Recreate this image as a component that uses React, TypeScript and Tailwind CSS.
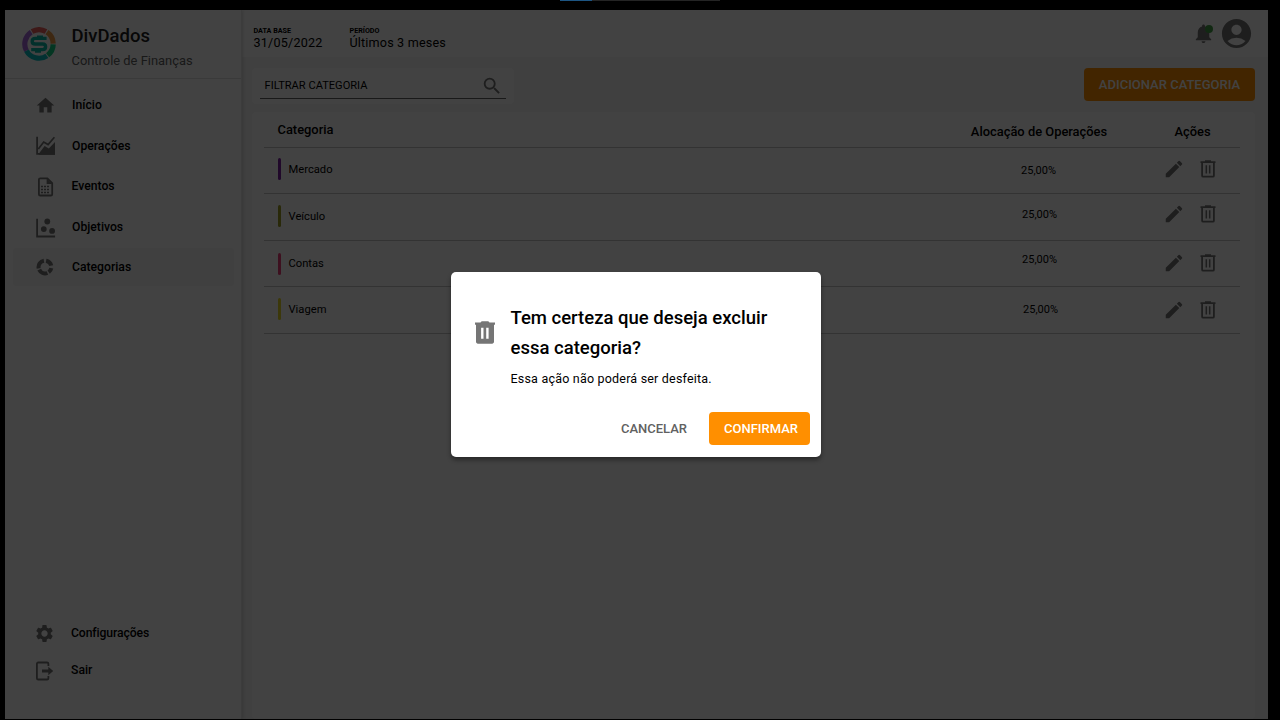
import type { ReactNode } from "react";
import { MdHome, MdSettings, MdNotifications, MdAccountCircle, MdEdit, MdSearch } from "react-icons/md";

function Logo() {
  return (
    <svg viewBox="0 0 34 34" className="mt-px size-[34px]" fill="none">
      <g strokeWidth="5.2">
        <path d="M10 4.6A14.2 14.2 0 0 1 24 4.6" stroke="#f0605c" />
        <path d="M25 5.2A14.2 14.2 0 0 1 31.2 16.6" stroke="#f09a45" />
        <path d="M31.2 17.4A14.2 14.2 0 0 1 25.6 28.3" stroke="#12cf84" />
        <path d="M24.9 28.8A14.2 14.2 0 0 1 4.4 23.6" stroke="#08bfc2" />
        <path d="M4.4 23.6A14.2 14.2 0 0 1 9.2 5.2" stroke="#a66adc" />
      </g>
      <path d="M24.6 11.4H13.2c-2 0-3 1-3 2.800s1 2.800 3 2.800h7.400c2 0 3 1 3 2.800s-1 2.800-3 2.800H9.200" stroke="#08b8a8" strokeWidth="3.400" />
      <path d="M15 8.400h6v2h-6zM13 23.600h6v2.200h-6z" fill="#08b8a8" />
    </svg>
  );
}

function AreaIcon() {
  return (
    <svg viewBox="0 0 20 20" className="size-5">
      <path d="M1.1.8v17.1H19" fill="none" stroke="currentColor" strokeWidth="1.8" />
      <path d="M2.3 13l5.400-7 4.400 2.600L18.400 1.200" fill="none" stroke="currentColor" strokeWidth="1.700" />
      <path d="M3 17.600l5.600-7.500 4.200 2.500L19 6v12.700H2.500z" fill="currentColor" />
    </svg>
  );
}

function FileIcon() {
  return (
    <svg viewBox="0 0 20 20" className="size-5">
      <path d="M4.200 1.300h7.200l4.800 4.900v11a1.3 1.3 0 0 1-1.3 1.3H4.200a1.3 1.3 0 0 1-1.3-1.3V2.600a1.3 1.3 0 0 1 1.3-1.3z" fill="none" stroke="currentColor" strokeWidth="1.800" />
      <path d="M10.600 1.300l5.600 5.600h-5.600z" fill="currentColor" />
      <path d="M5 9.500h8M5 12.500h8M5 15.500h8" stroke="currentColor" strokeWidth="1.700" strokeDasharray="2 1" />
    </svg>
  );
}

function ScatterIcon() {
  return (
    <svg viewBox="0 0 20 20" className="size-5" fill="currentColor">
      <path d="M1.1.8v17.700h18" fill="none" stroke="currentColor" strokeWidth="1.800" />
      <circle cx="7.800" cy="11.100" r="2.900" />
      <circle cx="11.300" cy="3.500" r="2.900" />
      <circle cx="16.100" cy="12.900" r="2.900" />
    </svg>
  );
}

function DonutIcon() {
  return (
    <svg viewBox="0 0 20 20" className="size-5" fill="none" stroke="currentColor" strokeWidth="4">
      <path d="M10.100 3.700A6.400 6.400 0 0 1 15.200 8.700" />
      <path d="M15.300 11.200a6.400 6.400 0 0 1-2.600 4" />
      <path d="M11.400 16A6.400 6.400 0 0 1 3.200 12.700" />
      <path d="M2.700 11.400A6.400 6.400 0 0 1 7.900 3.700" />
    </svg>
  );
}

function ExitIcon() {
  return (
    <svg viewBox="0 0 20 20" className="size-5">
      <path d="M13.400 5V2.800A1.3 1.3 0 0 0 12.100 1.500H3.200a1.3 1.3 0 0 0-1.3 1.3v14.400a1.3 1.3 0 0 0 1.3 1.3h8.900a1.3 1.3 0 0 0 1.3-1.3V15" fill="none" stroke="currentColor" strokeWidth="1.800" />
      <path d="M7 8.400h6.300V5.700l4.900 4.300-4.900 4.300v-2.700H7z" fill="currentColor" />
    </svg>
  );
}

function TrashOutline() {
  return (
    <svg viewBox="0 0 16 18" className="h-[18px] w-4" fill="none" stroke="currentColor">
      <path d="M.5 2.100h15M5 1.200h6" strokeWidth="1.700" />
      <path d="M2.100 2.500v13.200c0 .6.4 1 1 1h9.800c.6 0 1-.4 1-1V2.500" strokeWidth="1.800" />
      <path d="M6.300 5.200v8.200M9.700 5.200v8.200" strokeWidth="1.500" />
    </svg>
  );
}

function TrashSolid() {
  return (
    <svg viewBox="0 0 20 23" className="h-[23px] w-5" fill="#757575">
      <path d="M0 1.400h5.500L6.700.3h6.600l1.200 1.100H20v2.300H0z" />
      <path fillRule="evenodd" d="M1 3h18v17.800c0 1.100-.8 1.900-1.900 1.900H2.900C1.800 22.700 1 21.900 1 20.800zM6.100 6.800v11h2.400v-11zM11.200 6.800v11h2.400v-11z" />
    </svg>
  );
}

function NavItem({ icon, label, className }: { icon: ReactNode; label: string; className: string }) {
  return (
    <div className={`flex items-center rounded text-[#757575] ${className}`}>
      <span className="flex shrink-0">{icon}</span>
      <span className="text-[12.2px] font-medium text-black">{label}</span>
    </div>
  );
}

const rows = [
  { name: "Mercado", height: "h-[46px]", bar: "bg-[#7b1fa2]", value: "pr-[5px] pt-[1px]", actions: "pb-[3px]", barPos: "-mt-[3px]", label: "pb-0" },
  { name: "Veículo", height: "h-[47px]", bar: "bg-[#9e9d24]", value: "pr-[3px] pb-[3px]", actions: "pb-[6px]", barPos: "-mt-[2px]", label: "pb-0" },
  { name: "Contas", height: "h-[46px]", bar: "bg-[#ec407a]", value: "pr-[3px] pb-[7px]", actions: "pb-[1px]", barPos: "-mt-px", label: "pt-[1px]" },
  { name: "Viagem", height: "h-[47px]", bar: "bg-[#e6d82a]", value: "pr-[1px] pt-[1px]", actions: "pb-0", barPos: "-mt-[2px]", label: "pb-0" },
];

export default function App() {
  return (
    <div className="relative h-[720px] w-[1280px] overflow-hidden bg-black pt-[10px] pr-3 pb-px pl-[5px] font-['Roboto',sans-serif] text-black">
      <div className="flex h-full bg-[#f5f5f5]">
        <aside className="z-10 flex w-[237px] shrink-0 flex-col border-r border-[#e8e8e8] bg-white shadow-[1px_0_3px_rgba(0,0,0,0.14)]">
          <div className="flex h-[69px] shrink-0 border-b border-[#e0e0e0] pt-4 pl-[17px]">
            <Logo />
            <div className="pl-[15.5px]">
              <div className="text-[18.5px] leading-[20px] font-medium text-[#212121]">DivDados</div>
              <div className="pt-[6px] text-[12.9px] leading-[18px] text-[#616161]">Controle de Finanças</div>
            </div>
          </div>
          <nav className="flex flex-1 flex-col pt-[6px] pr-[7px] pb-[30px] pl-2">
            <NavItem className="h-[41px] gap-[16px] pl-[22px]" icon={<MdHome className="size-[21px]" />} label="Início" />
            <NavItem className="h-[40px] gap-[16px] pl-[23px]" icon={<AreaIcon />} label="Operações" />
            <NavItem className="h-[41px] gap-[15.5px] pl-[23px]" icon={<FileIcon />} label="Eventos" />
            <NavItem className="h-[41px] gap-[16px] pl-[23px]" icon={<ScatterIcon />} label="Objetivos" />
            <NavItem className="h-[38px] gap-[16px] bg-[#f5f5f5] pl-[23px]" icon={<DonutIcon />} label="Categorias" />
            <NavItem className="mt-auto h-[37px] gap-[16px] pl-[21px] tracking-[-0.1px]" icon={<MdSettings className="size-[21px]" />} label="Configurações" />
            <NavItem className="h-[37px] gap-[16.500px] pl-[21.5px]" icon={<ExitIcon />} label="Sair" />
          </nav>
        </aside>
        <main className="flex min-w-0 flex-1 flex-col">
          <header className="flex h-[47px] shrink-0 bg-white pr-[14px] pl-[11.5px]">
            <div className="w-24 pt-[17px]">
              <div className="text-[7.2px] leading-[8px] font-bold">DATA BASE</div>
              <div className="text-[12.6px] leading-[15px] tracking-[0.2px]">31/05/2022</div>
            </div>
            <div className="pt-[17px]">
              <div className="text-[7.2px] leading-[8px] font-bold">PERÍODO</div>
              <div className="text-[12.6px] leading-[15px] tracking-[0.17px]">Últimos 3 meses</div>
            </div>
            <div className="ml-auto flex pt-[5px] text-[#757575]">
              <div className="relative mr-[4px] pt-[7px]">
                <MdNotifications className="size-[23px]" />
                <span className="absolute top-[10px] right-[2px] size-2 rounded-full bg-[#43a047]" />
              </div>
              <MdAccountCircle className="mt-[0.5px] size-[35px]" />
            </div>
          </header>
          <div className="flex items-start justify-between pt-[11px] pr-[13px] pl-[10px]">
            <div className="h-9 w-[262px] rounded bg-white px-[8px]">
              <div className="flex h-[31px] w-[246px] items-center justify-between border-b border-[#616161] pr-[3px] pl-[4.5px]">
                <span className="pt-[6px] text-[11.1px]">FILTRAR CATEGORIA</span>
                <MdSearch className="mt-[5px] size-[22px] text-[#757575]" />
              </div>
            </div>
            <button className="h-[33px] w-[171px] rounded bg-[#ff8f00] text-[13px] font-medium text-white">ADICIONAR CATEGORIA</button>
          </div>
          <section className="mt-2 mr-[13px] ml-[10px] flex-1 rounded bg-white pr-[15px] pl-3">
            <div className="flex h-[36px] border-b border-[#c6c6c6] pl-[13.5px]">
              <div className="flex-1 pt-[9px] text-[12.9px] leading-[18px] font-medium">Categoria</div>
              <div className="w-[156px] pt-[11px] text-center text-[12.9px] leading-[18px] font-medium">Alocação de Operações</div>
              <div className="w-[123px] pt-[11px] pl-[28px] text-center text-[12.9px] leading-[18px] font-medium">Ações</div>
            </div>
            {rows.map((row) => (
              <div key={row.name} className={`flex border-b border-[#c6c6c6] pl-[13.5px] ${row.height}`}>
                <div className={`flex flex-1 items-center ${row.label}`}>
                  <span className={`mr-[7.5px] h-[22px] w-[3.5px] rounded-sm ${row.bar} ${row.barPos}`} />
                  <span className="text-[11.2px]">{row.name}</span>
                </div>
                <div className={`flex w-[160px] items-center justify-center text-[11px] ${row.value}`}>25,00%</div>
                <div className={`flex w-[119px] items-center justify-end gap-[15.5px] pr-[24px] text-[#757575] ${row.actions}`}>
                  <MdEdit className="size-[22px]" />
                  <TrashOutline />
                </div>
              </div>
            ))}
          </section>
        </main>
      </div>

      <div className="absolute inset-0 z-20 bg-black/74" />
      <div className="absolute top-0 left-[560px] z-30 flex h-px w-40 bg-[#242424]">
        <span className="w-8 bg-[#1d5583]" />
      </div>

      <div role="dialog" className="absolute top-[272px] left-[451px] z-30 flex h-[185px] w-[370px] flex-col rounded-[5px] bg-white pr-[11px] pb-3 shadow-[0_3px_4px_rgba(0,0,0,0.4)]">
        <div className="flex pt-[31px] pl-6">
          <div className="w-[35.5px] pt-[18px]">
            <TrashSolid />
          </div>
          <div>
            <h2 className="w-[280px] text-[18.5px] leading-[30px] font-medium">Tem certeza que deseja excluir essa categoria?</h2>
            <p className="pt-[7px] text-[12.5px] leading-[18px] tracking-[0.2px]">Essa ação não poderá ser desfeita.</p>
          </div>
        </div>
        <div className="mt-auto flex items-center justify-end gap-[22px]">
          <button className="text-[13px] font-medium text-[#616161]">CANCELAR</button>
          <button className="h-[33px] w-[101px] rounded bg-[#ff8f00] pl-[3px] text-[13px] font-medium text-white">CONFIRMAR</button>
        </div>
      </div>
    </div>
  );
}
